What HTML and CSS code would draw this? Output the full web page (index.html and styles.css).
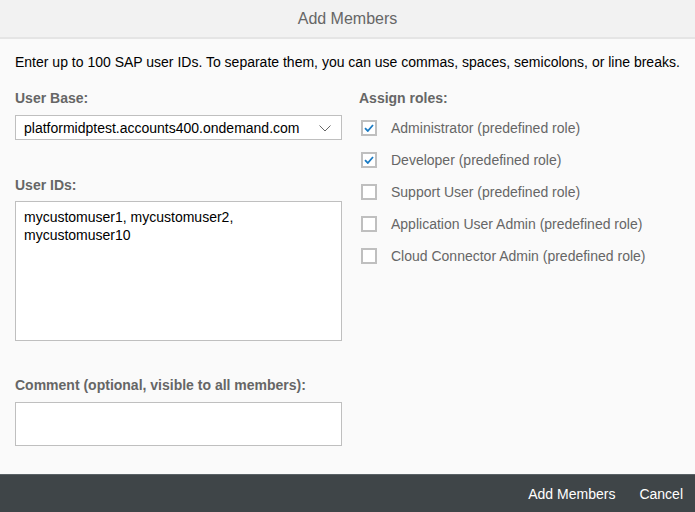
FILE: index.html
```html
<!DOCTYPE html>
<html>
<head>
<meta charset="utf-8">
<link rel="stylesheet" href="styles.css">
</head>
<body>
<div class="dialog">
  <header class="header">Add Members</header>
  <main class="content">
    <p class="intro">Enter up to 100 SAP user IDs. To separate them, you can use commas, spaces, semicolons, or line breaks.</p>
    <div class="columns">
      <div class="left">
        <div class="label">User Base:</div>
        <div class="select">
          <span>platformidptest.accounts400.ondemand.com</span>
          <svg class="chev" width="12" height="7" viewBox="0 0 12 7"><path d="M0.5 0.5 L6 6 L11.5 0.5" fill="none" stroke="#666" stroke-width="1"/></svg>
        </div>
        <div class="label label-ids">User IDs:</div>
        <div class="textarea">mycustomuser1, mycustomuser2,<br>mycustomuser10</div>
        <div class="label label-comment">Comment (optional, visible to all members):</div>
        <div class="input"></div>
      </div>
      <div class="right">
        <div class="label label-roles">Assign roles:</div>
        <ul class="roles">
          <li class="role"><span class="cb checked"><svg width="10" height="8" viewBox="0 0 10 8"><path d="M1 4.2 L3.8 7 L9 1" fill="none" stroke="#1a7bc4" stroke-width="1.8"/></svg></span>Administrator (predefined role)</li>
          <li class="role"><span class="cb checked"><svg width="10" height="8" viewBox="0 0 10 8"><path d="M1 4.2 L3.8 7 L9 1" fill="none" stroke="#1a7bc4" stroke-width="1.8"/></svg></span>Developer (predefined role)</li>
          <li class="role"><span class="cb"></span>Support User (predefined role)</li>
          <li class="role"><span class="cb"></span>Application User Admin (predefined role)</li>
          <li class="role"><span class="cb"></span>Cloud Connector Admin (predefined role)</li>
        </ul>
      </div>
    </div>
  </main>
  <footer class="footer">
    <span class="btn">Add Members</span>
    <span class="btn">Cancel</span>
  </footer>
</div>
</body>
</html>
```
FILE: styles.css
```css
* { box-sizing: border-box; }
html, body { margin: 0; padding: 0; }
body {
  font-family: "Liberation Sans", Arial, sans-serif;
  font-size: 14px;
  color: #000;
  background: #fafafa;
}
.dialog {
  width: 695px;
  height: 512px;
  display: flex;
  flex-direction: column;
  background: #fafafa;
}
.header {
  height: 39px;
  flex: none;
  background: #f2f2f2;
  border-bottom: 2px solid #e5e5e5;
  color: #666;
  font-size: 16px;
  text-align: center;
  line-height: 37px;
}
.content {
  flex: 1;
  padding: 0 15px;
}
.intro {
  margin: 14px 0 0;
  line-height: 18px;
  color: #000;
}
.columns {
  display: flex;
  gap: 17px;
  margin-top: 18px;
}
.left { width: 327px; display: flex; flex-direction: column; }
.right { flex: 1; }
.label {
  font-weight: bold;
  color: #666;
  line-height: 18px;
  margin-bottom: 8px;
}
.label-roles { margin-bottom: 5px; }
.label-ids { margin-top: 36px; margin-bottom: 0; height: 25px; }
.label-comment { margin-top: 35px; margin-bottom: 0; height: 26px; }
.select {
  height: 25px;
  background: #fff;
  border: 1px solid #bfbfbf;
  display: flex;
  align-items: center;
  justify-content: space-between;
  padding: 0 10px 0 8px;
  color: #000;
}
.chev { margin-top: 1px; }
.textarea {
  height: 140px;
  background: #fff;
  border: 1px solid #bfbfbf;
  padding: 6px 8px;
  line-height: 18px;
}
.input {
  height: 44px;
  background: #fff;
  border: 1px solid #bfbfbf;
}
.roles {
  list-style: none;
  margin: 0;
  padding: 0 0 0 2px;
}
.role {
  height: 32px;
  display: flex;
  align-items: center;
  color: #666;
}
.cb {
  width: 16px;
  height: 16px;
  border: 2px solid #bfbfbf;
  background: #fff;
  margin-right: 14px;
  display: flex;
  align-items: center;
  justify-content: center;
}
.footer {
  height: 38px;
  flex: none;
  background: #3f4548;
  border-top: 1px solid #5a6266;
  display: flex;
  justify-content: flex-end;
  align-items: center;
  gap: 24px;
  padding-right: 12px;
}
.btn {
  color: #fff;
  font-size: 14px;
}
```
